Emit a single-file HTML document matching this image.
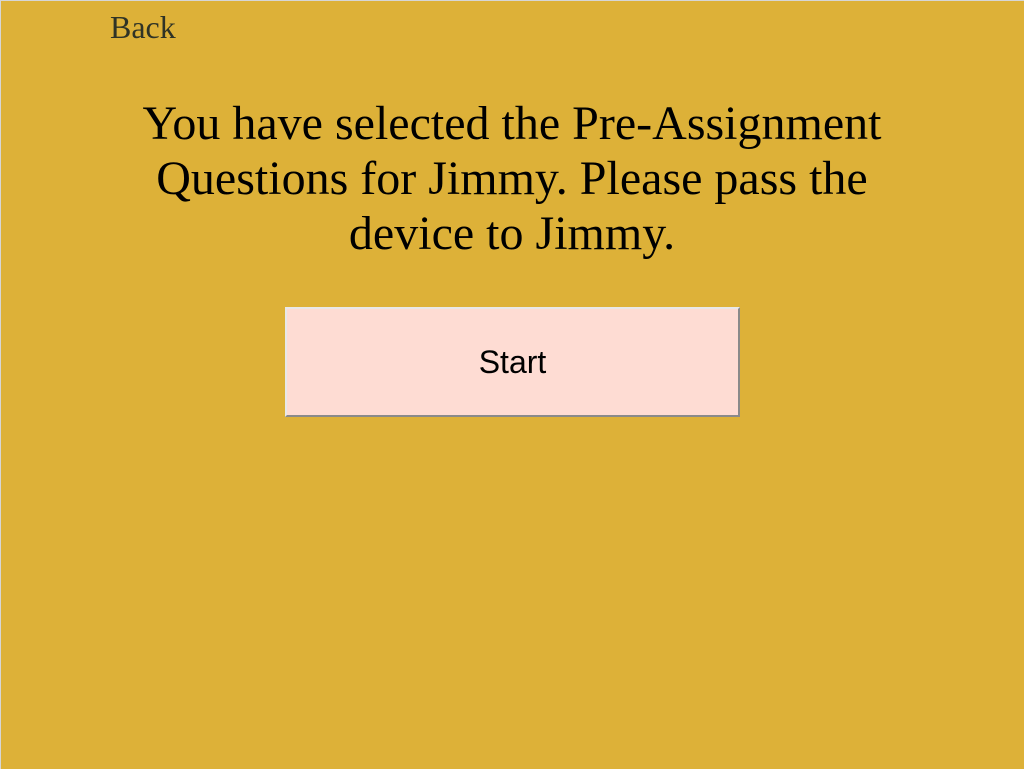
<!DOCTYPE html>
<html><head><meta charset="utf-8"><style>
html,body{margin:0;padding:0;}
body{width:1024px;height:769px;background:#ddb138;position:relative;overflow:hidden;box-sizing:border-box;border-top:1px solid #d6d6d6;border-left:1px solid #d6d6d6;}
.back{position:absolute;left:109px;top:8px;font:32px "Liberation Serif",serif;color:#2f3326;}
h1{position:absolute;left:0;top:95px;width:1022px;margin:0;text-align:center;font:normal 48px/55px "Liberation Serif",serif;color:#000;}
.btn{position:absolute;left:284px;top:306px;width:455px;height:110px;box-sizing:border-box;background:#fedcd3;border:2px solid;border-color:#e8e8e8 #8a8a8a #8a8a8a #e8e8e8;font:32px "Liberation Sans",sans-serif;color:#000;display:flex;align-items:center;justify-content:center;}
</style></head><body>
<div class="back">Back</div>
<h1>You have selected the Pre-Assignment<br>Questions for Jimmy. Please pass the<br>device to Jimmy.</h1>
<div class="btn">Start</div>
</body></html>
